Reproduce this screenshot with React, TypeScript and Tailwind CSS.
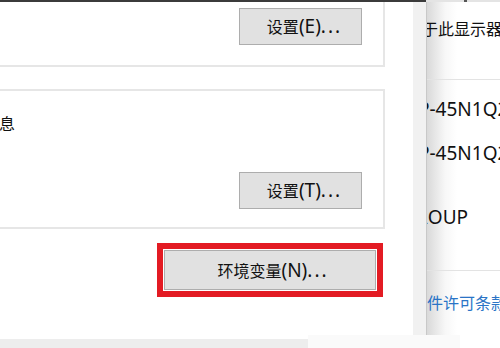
const font = { fontFamily: '"Noto Sans CJK SC", "Noto Sans", sans-serif' };

// Latin runs in the screenshot are drawn noticeably wider than the CJK glyphs
function Lat({ children, className = "" }: { children: React.ReactNode; className?: string }) {
  return <span className={`text-[19px] ${className}`} style={{ fontFamily: '"Noto Sans", sans-serif' }}>{children}</span>;
}

function WinButton({ zh, key2, className = "" }: { zh: string; key2: string; className?: string }) {
  return (
    <div
      className={`flex items-center justify-center border border-[#adadad] bg-[#e1e1e1] text-[16px] leading-none text-[#111] ${className}`}
    >
      <span className="whitespace-nowrap">
        {zh}
        <Lat>({key2})</Lat>
        <Lat className="tracking-[2px]">...</Lat>
      </span>
    </div>
  );
}

export default function App() {
  return (
    <div className="flex h-[348px] w-[500px] flex-col overflow-hidden bg-white" style={font}>
      {/* top edge of the window above */}
      <div className="flex h-[2px] shrink-0">
        <div className="w-[426px] bg-[#3b3b3b]" />
        <div className="flex-1 bg-[#e4e4e4]">
          <div className="ml-[38px] h-full w-[3px] bg-[#555]" />
        </div>
      </div>

      <div className="flex min-h-0 flex-1">
        {/* system properties dialog */}
        <div className="w-[413px] shrink-0 overflow-hidden">
          <div className="-ml-[10px] flex h-[65px] w-[395px] items-start justify-end border-r-2 border-b-2 border-[#e6e6e6] pt-[6px] pr-[21px]">
            <WinButton zh="设置" key2="E" className="h-[37px] w-[123px] pl-[8px]" />
          </div>

          <div className="-ml-[10px] mt-[22px] flex h-[140px] w-[395px] flex-col border-y-2 border-r-2 border-[#e6e6e6]">
            <div className="-ml-[1px] mt-[22px] pl-[10px] text-[16px] leading-[20px] text-[#111]">
              <span className="-ml-[16px] inline-block">信息</span>
            </div>
            <div className="mt-[39px] flex justify-end pr-[21px]">
              <WinButton zh="设置" key2="T" className="h-[37px] w-[123px] pl-[8px]" />
            </div>
          </div>

          <div className="ml-[157px] mt-[14px] w-[226px] border-[6px] border-[#e31b23] p-px">
            <WinButton zh="环境变量" key2="N" className="h-[40px] pl-[6px]" />
          </div>
        </div>

        {/* splitter */}
        <div className="w-[14px] shrink-0 border-r border-[#c8c8c8] bg-[#f1f1f1]" />

        {/* settings page behind */}
        <div className="flex min-w-0 flex-1 flex-col overflow-hidden bg-[linear-gradient(to_right,#d9d9d9,#f7f7f7_18px,#ffffff_30px)] text-[16px] leading-[20px] text-[#111]">
          <div className="-ml-[5px] mt-[16px] whitespace-nowrap">于此显示器</div>
          <div className="mt-[41px] h-px shrink-0 bg-[#e3e3e3]" />
          <div className="-ml-[9px] mt-[19px] whitespace-nowrap"><Lat>P-45N1Q2</Lat></div>
          <div className="-ml-[9px] mt-[24px] whitespace-nowrap"><Lat>P-45N1Q2</Lat></div>
          <div className="-ml-[11px] mt-[44px] whitespace-nowrap"><Lat>ROUP</Lat></div>
          <div className="mt-[43px] h-px shrink-0 bg-[#e3e3e3]" />
          <div className="mt-[21px] whitespace-nowrap text-[#2a74c6]">件许可条款</div>
        </div>
      </div>

      {/* bottom strip */}
      <div className="flex h-[13px] shrink-0">
        <div className="mt-[4px] w-[308px] bg-[#ededed]" />
        <div className="w-[152px] bg-[#fafafa]" />
        <div className="flex-1 bg-white" />
      </div>
    </div>
  );
}
